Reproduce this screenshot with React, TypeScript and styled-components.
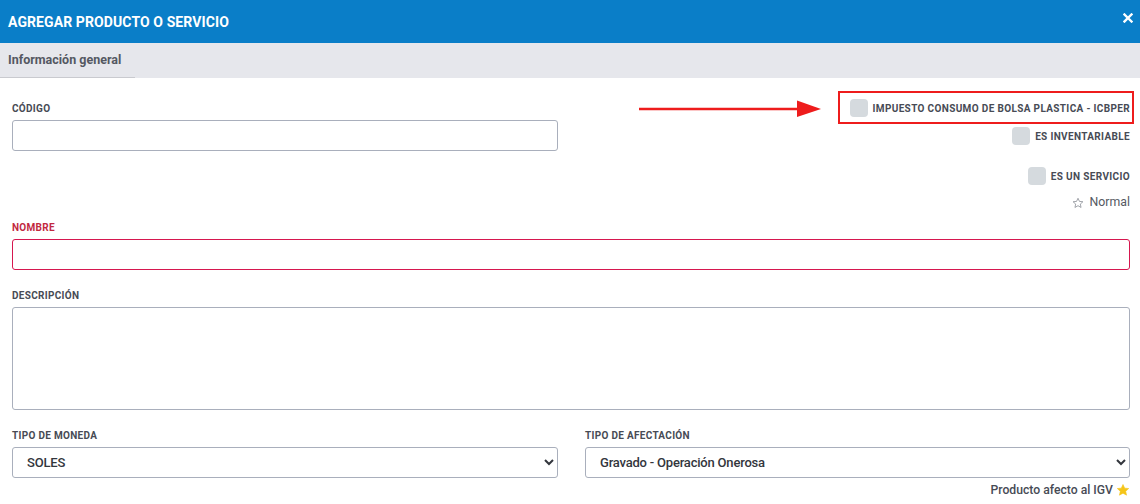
import React from "react";
import styled, { createGlobalStyle } from "styled-components";

const Global = createGlobalStyle`
  html, body { margin: 0; padding: 0; background: #ffffff; }
  body { font-family: Roboto, "Liberation Sans", Arial, sans-serif; }
  * { box-sizing: border-box; }
`;

const Modal = styled.div`
  width: 1140px;
  height: 504px;
  overflow: hidden;
  background: #fff;
  position: relative;
`;

const Header = styled.div`
  height: 43px;
  background: #0a7ec8;
  display: flex;
  align-items: center;
  justify-content: space-between;
  padding: 0 6px 0 8px;
`;

const Title = styled.h1`
  margin: 0;
  color: #fff;
  font-size: 14px;
  font-weight: 700;
  letter-spacing: 0.1px;
`;

const CloseBtn = styled.button`
  border: 0;
  background: transparent;
  padding: 0;
  width: 12px;
  height: 12px;
  display: flex;
  align-items: center;
  justify-content: center;
  margin-top: -8px;
  cursor: pointer;
`;

const TabBar = styled.div`
  height: 35px;
  background: #e6e7ec;
  display: flex;
  align-items: stretch;
`;

const Tab = styled.div`
  display: flex;
  align-items: center;
  padding: 0 14px 1px 8px;
  width: 135px;
  font-size: 12.5px;
  font-weight: 700;
  color: #545862;
  border-bottom: 1px solid #c9cacf;
  white-space: nowrap;
`;

const Body = styled.div`
  padding: 21px 10px 0 12px;
`;

const TwoCols = styled.div<{ $mt?: number }>`
  display: grid;
  grid-template-columns: 546px 1fr;
  column-gap: 27px;
  align-items: start;
  margin-top: ${(p) => p.$mt ?? 0}px;
`;

const Field = styled.div<{ $mt?: number }>`
  display: flex;
  flex-direction: column;
  margin-top: ${(p) => p.$mt ?? 0}px;
`;

const Label = styled.label<{ $danger?: boolean }>`
  display: block;
  font-size: 10px;
  line-height: 11px;
  font-weight: 700;
  color: ${(p) => (p.$danger ? "#c2283f" : "#474b55")};
  margin-bottom: 6px;
  letter-spacing: 0.3px;
`;

const Input = styled.input<{ $danger?: boolean }>`
  height: 31px;
  width: 100%;
  border: 1px solid ${(p) => (p.$danger ? "#d6174f" : "#a9afbc")};
  border-radius: 3px;
  padding: 0 12px;
  font-family: inherit;
  font-size: 12px;
  outline: none;
`;

const TextArea = styled.textarea`
  height: 103px;
  width: 100%;
  border: 1px solid #a9afbc;
  border-radius: 3px;
  resize: none;
  padding: 6px 12px;
  font-family: inherit;
  outline: none;
`;

const Select = styled.select`
  height: 31px;
  width: 100%;
  border: 1px solid #a9afbc;
  border-radius: 3px;
  background: #fff;
  padding: 0 8px 0 10px;
  font-family: inherit;
  font-size: 13px;
  font-weight: 500;
  letter-spacing: -0.2px;
  color: #33363d;
  outline: none;
`;

const CheckList = styled.div`
  display: flex;
  flex-direction: column;
  align-items: flex-end;
`;

const CheckRow = styled.label<{ $mt?: number; $highlight?: boolean }>`
  position: relative;
  display: flex;
  align-items: center;
  gap: 5px;
  height: 18px;
  margin-top: ${(p) => p.$mt ?? 0}px;
  font-size: 10px;
  font-weight: 700;
  color: #474b55;
  letter-spacing: 0.35px;
  white-space: nowrap;
  ${(p) =>
    p.$highlight &&
    `
    &::after {
      content: "";
      position: absolute;
      top: -8px;
      bottom: -7px;
      left: -12px;
      right: -4px;
      border: 2px solid #ee1c1c;
      pointer-events: none;
    }
  `}
`;

const Box = styled.span`
  width: 18px;
  height: 18px;
  border-radius: 4px;
  background: #d5dade;
  flex: none;
`;

const Rating = styled.div`
  display: flex;
  align-items: center;
  gap: 6px;
  margin-top: 11px;
  font-size: 12.3px;
  line-height: 13px;
  color: #555962;
`;

const Hint = styled.div`
  display: flex;
  justify-content: flex-end;
  align-items: center;
  gap: 3px;
  margin-top: 5px;
  font-size: 12.2px;
  font-weight: 500;
  color: #474b55;
`;

const Arrow = styled.svg`
  position: absolute;
  left: 638px;
  top: 99px;
`;

const Star = ({ filled, size = 12 }: { filled?: boolean; size?: number }) => (
  <svg width={size} height={size} viewBox="0 0 24 24">
    <path
      d="M12 2.5l2.9 6.3 6.9.7-5.2 4.6 1.5 6.8L12 17.4l-6.1 3.5 1.5-6.8-5.2-4.6 6.9-.7z"
      fill={filled ? "#f5c518" : "none"}
      stroke={filled ? "#f5c518" : "#8a8e96"}
      strokeWidth={filled ? 1 : 1.6}
      strokeLinejoin="round"
    />
  </svg>
);

export default function App() {
  return (
    <Modal>
      <Global />
      <Header>
        <Title>AGREGAR PRODUCTO O SERVICIO</Title>
        <CloseBtn aria-label="Cerrar">
          <svg width="10" height="10" viewBox="0 0 10 10">
            <path d="M1.5 1.5l7 7M8.5 1.5l-7 7" stroke="#fff" strokeWidth="2.4" strokeLinecap="square" />
          </svg>
        </CloseBtn>
      </Header>
      <TabBar>
        <Tab>Información general</Tab>
      </TabBar>
      <Body>
        <TwoCols>
          <Field $mt={4}>
            <Label>CÓDIGO</Label>
            <Input />
          </Field>
          <CheckList>
            <CheckRow $highlight>
              <Box />
              IMPUESTO CONSUMO DE BOLSA PLASTICA - ICBPER
            </CheckRow>
            <CheckRow $mt={10}>
              <Box />
              ES INVENTARIABLE
            </CheckRow>
            <CheckRow $mt={22}>
              <Box />
              ES UN SERVICIO
            </CheckRow>
            <Rating>
              <Star />
              Normal
            </Rating>
          </CheckList>
        </TwoCols>
        <Field $mt={13}>
          <Label $danger>NOMBRE</Label>
          <Input $danger />
        </Field>
        <Field $mt={20}>
          <Label>DESCRIPCIÓN</Label>
          <TextArea />
        </Field>
        <TwoCols $mt={20}>
          <Field>
            <Label>TIPO DE MONEDA</Label>
            <Select defaultValue="SOLES">
              <option>SOLES</option>
              <option>DÓLARES</option>
            </Select>
          </Field>
          <Field>
            <Label>TIPO DE AFECTACIÓN</Label>
            <Select defaultValue="g">
              <option value="g">Gravado - Operación Onerosa</option>
            </Select>
            <Hint>
              Producto afecto al IGV
              <Star filled size={14} />
            </Hint>
          </Field>
        </TwoCols>
      </Body>
      <Arrow width="186" height="20" viewBox="0 0 186 20">
        <line x1="1" y1="10" x2="162" y2="10" stroke="#ee1c1c" strokeWidth="2.5" />
        <polygon points="159,1.5 183,10 159,18" fill="#ee1c1c" />
      </Arrow>
    </Modal>
  );
}
